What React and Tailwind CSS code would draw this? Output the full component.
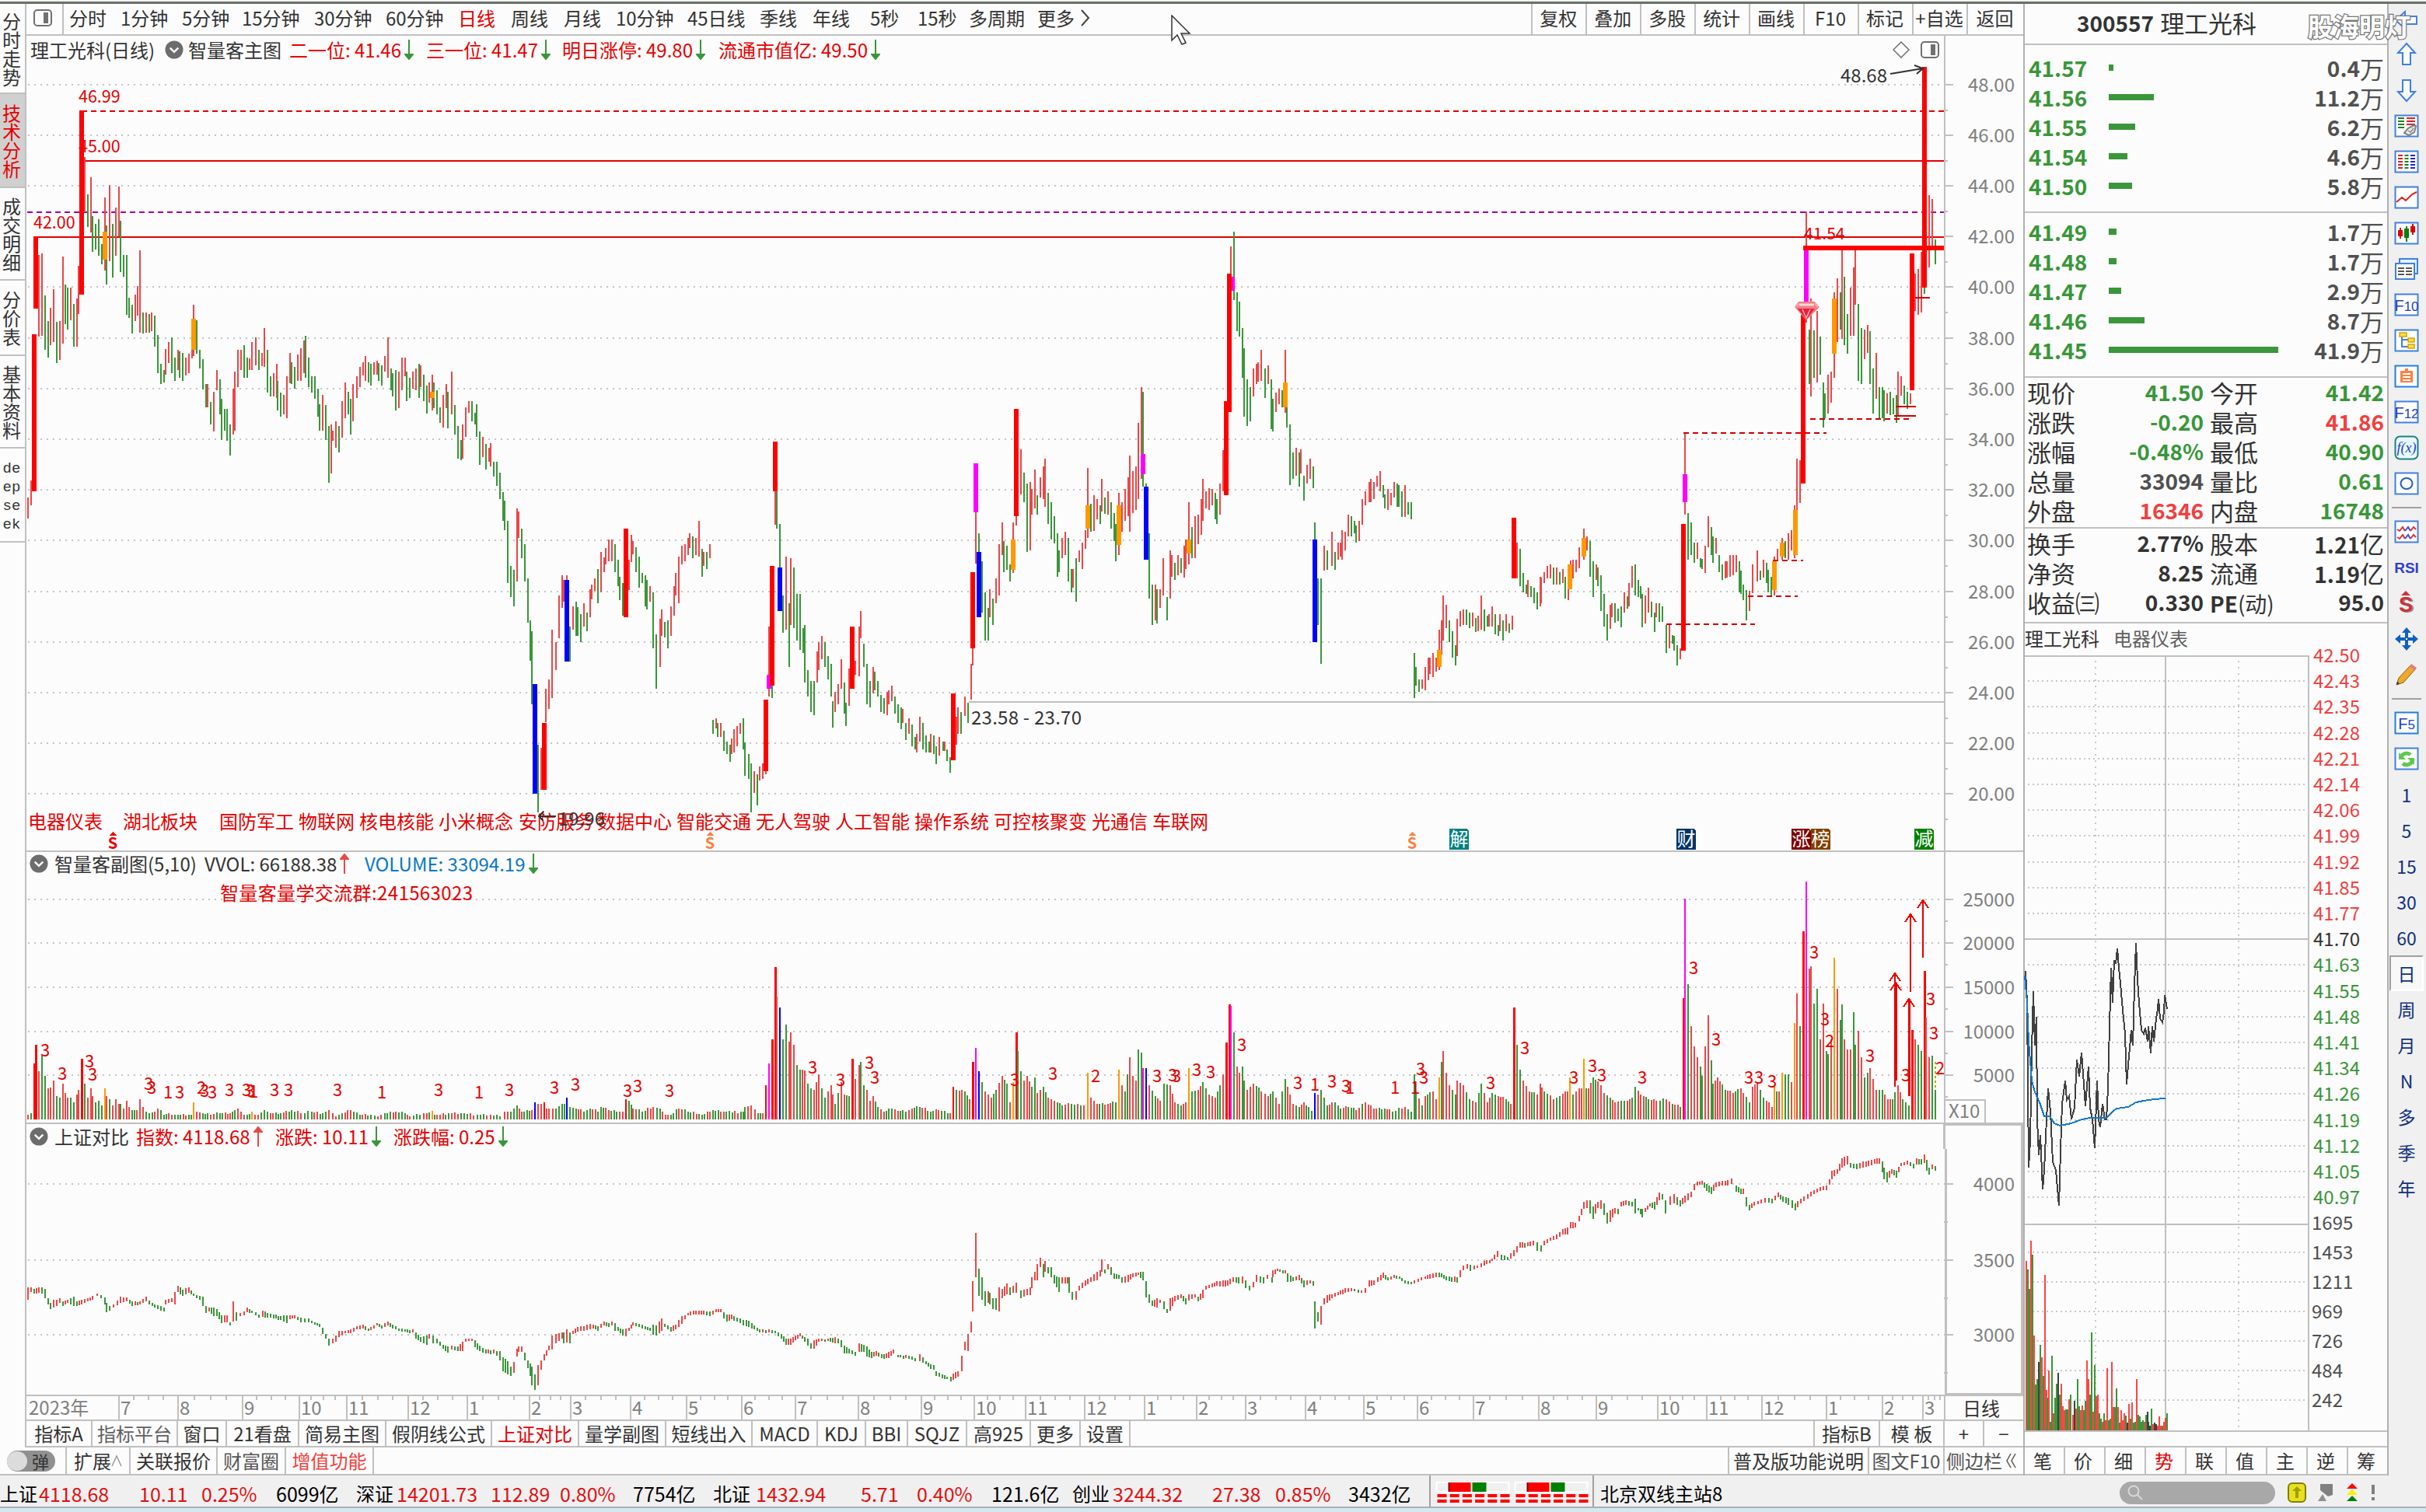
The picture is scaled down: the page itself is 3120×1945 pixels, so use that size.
import { Fragment } from 'react'

const RED = '#e60000'
const UP = '#e8484a'
const DOWN = '#3a963a'
const LINE = '#c0c0c0'

// Chart samples are stored on a finer grid than the page
const KX = 1.5077
const KY = 2.24
const KV = 2.6133
const px = (x) => Math.round(x / KX)
const py = (y) => Math.round(y / KY)

// x high low
const PRICE = `55 1433 1495,61 1384 1455,76 735 970,82 730 967,88 852 1007,94 925 1030,98 887 995,104 833 985,110 928 1047,116 925 1038,122 740 990,126 820 935,131 828 950,137 828 922,143 875 998,149 860 998,152 766 905,164 452 612,170 560 653,176 511 670,179 622 725,185 645 720,191 632 738,197 703 762,203 570 780,206 650 820,212 533 753,218 645 800,224 597 738,230 538 680,234 636 783,240 735 797,246 735 908,251 857 917,257 878 962,263 850 925,267 825 910,272 721 958,278 900 962,284 900 958,290 905 958,294 900 955,300 910 998,306 965 1075,312 1048 1107,318 1066 1102,321 1005 1080,327 985 1047,333 972 1075,339 1030 1098,345 1008 1066,348 1012 1089,354 1018 1098,360 1030 1083,366 1020 1075,372 985 1033,375 878 1025,381 923 1020,387 1008 1062,393 1035 1123,399 1107 1173,402 1107 1173,408 1157 1222,414 1129 1244,420 1066 1124,426 1093 1195,430 1150 1267,436 1178 1240,441 1178 1270,447 1222 1312,453 1120 1253,456 1071 1240,462 1008 1115,468 1008 1066,474 995 1089,480 1030 1089,484 1033 1066,489 985 1066,496 972 1052,502 1008 1066,508 1017 1055,512 945 1057,518 1008 1132,524 1084 1142,530 1075 1142,536 1048 1146,539 1098 1182,545 1132 1200,550 1137 1195,557 1084 1204,562 1017 1105,566 1044 1107,572 1057 1120,578 1021 1098,584 1004 1098,589 981 1075,592 968 1089,598 1030 1115,604 1084 1132,610 1084 1150,616 1120 1200,619 1164 1240,626 1137 1240,632 1168 1267,638 1227 1392,643 1222 1365,646 1240 1270,652 1213 1290,658 1227 1303,664 1155 1262,670 1102 1204,676 1129 1195,680 1150 1253,685 1107 1213,692 1084 1146,698 1057 1115,704 1044 1083,708 1026 1098,714 1044 1102,719 1048 1110,725 1044 1080,731 1039 1080,735 1045 1098,740 1052 1110,746 1026 1070,752 972 1089,758 1062 1125,761 1075 1142,768 1066 1182,773 1071 1177,779 1030 1124,785 1030 1084,789 1071 1155,795 1089 1146,801 1071 1120,806 1062 1124,813 1048 1146,815 1052 1115,821 1080 1155,827 1111 1191,833 1102 1160,839 1080 1182,842 1102 1177,848 1124 1195,854 1173 1218,860 1137 1231,866 1107 1177,869 1129 1235,876 1070 1195,882 1168 1253,888 1227 1321,894 1267 1326,897 1222 1321,903 1173 1258,909 1155 1190,915 1155 1213,921 1190 1222,924 1164 1258,930 1244 1339,936 1258 1316,942 1280 1352,948 1290 1330,951 1276 1343,957 1330 1374,963 1330 1401,969 1361 1437,975 1419 1500,978 1442 1528,984 1501 1680,990 1630 1720,996 1643 1747,1002 1465 1675,1005 1473 1550,1011 1523 1608,1017 1567 1675,1023 1667 1795,1029 1787 1903,1032 1819 2030,1044 2145 2340,1050 2155 2275,1059 1985 2080,1065 1957 2042,1071 1814 2012,1078 1850 1930,1084 1716 1840,1090 1657 1752,1093 1672 1733,1099 1658 1690,1105 1805 1907,1111 1747 1814,1117 1733 1832,1120 1750 1832,1126 1770 1850,1132 1738 1805,1138 1765 1818,1144 1697 1778,1147 1684 1728,1153 1667 1702,1159 1639 1738,1165 1590 1707,1171 1607 1648,1174 1580 1626,1180 1554 1617,1186 1554 1617,1192 1568 1648,1198 1612 1690,1201 1662 1729,1207 1680 1774,1219 1612 1700,1225 1541 1620,1228 1559 1597,1234 1576 1648,1240 1603 1693,1246 1652 1680,1252 1657 1747,1255 1670 1756,1261 1689 1733,1267 1706 1868,1273 1827 1984,1280 1783 1921,1283 1756 1832,1289 1792 1836,1295 1787 1868,1301 1747 1832,1307 1688 1774,1310 1652 1716,1316 1604 1738,1322 1572 1626,1328 1568 1617,1334 1550 1599,1337 1536 1580,1343 1546 1608,1349 1550 1599,1355 1500 1604,1361 1581 1662,1364 1590 1630,1370 1590 1640,1376 1568 1608,1383 2074 2114,1388 2070 2100,1391 2083 2124,1397 2083 2124,1403 2105 2164,1409 2137 2173,1415 2146 2195,1418 2128 2173,1424 2101 2168,1430 2092 2150,1436 2083 2114,1442 2070 2160,1445 2140 2236,1452 2173 2244,1457 2200 2340,1463 2222 2285,1469 2231 2320,1473 2208 2250,1479 2200 2244,1485 2200 2230,1491 1805 2007,1497 1940 2012,1503 1415 1513,1506 1415 1523,1512 1510 1640,1518 1716 1823,1524 1604 1814,1530 1738 1921,1533 1608 1801,1539 1635 1810,1545 1711 1845,1551 1711 1873,1557 1809 1882,1560 1800 1967,1566 1930 2007,1572 1962 2051,1578 1962 2060,1584 1877 1967,1587 1850 1930,1593 1832 1900,1599 1850 1922,1605 1890 1957,1611 1913 2007,1614 2020 2096,1620 1994 2051,1626 1971 2029,1632 1900 1985,1638 1967 2056,1641 2025 2092,1647 1926 2033,1659 1904 1944,1666 1805 1948,1669 1760 1840,1675 1855 1922,1681 1913 2029,1687 1962 2038,1693 1922 1998,1696 1935 1990,1702 1962 2007,1708 2003 2051,1714 2011 2056,1720 1994 2060,1723 1989 2029,1729 1976 2020,1735 2007 2056,1741 2029 2083,1747 2038 2101,1750 2043 2083,1756 2083 2132,1762 2070 2114,1768 2087 2150,1774 2123 2159,1777 2114 2168,1783 2065 2137,1789 2083 2159,1795 2118 2168,1801 2137 2168,1804 2115 2168,1810 2118 2173,1816 2150 2203,1822 2123 2177,1829 2137 2164,1832 2137 2164,1837 2159 2194,1843 2182 2226,1855 2065 2146,1858 2038 2114,1864 2051 2114,1871 2007 2064,1877 2025 2083,1883 1913 2016,1886 1868 1917,1892 1477 1625,1898 1536 1660,1904 1617 1765,1910 1707 1845,1916 1752 1845,1919 1698 1778,1925 1725 1801,1931 1667 1738,1937 1568 1716,1943 1505 1600,1946 1558 1648,1952 1572 1643,1958 1626 1675,1964 1505 1652,1970 1480 1514,1979 1295 1424,1985 1361 1446,1991 1393 1590,1997 1388 1586,2000 1410 1482,2006 1352 1464,2012 1428 1482,2018 1375 1433,2024 1344 1437,2027 1321 1460,2033 1420 1510,2039 1446 1555,2045 1487 1565,2051 1536 1662,2054 1585 1648,2060 1549 1608,2066 1532 1600,2072 1549 1675,2078 1639 1706,2081 1640 1693,2087 1608 1733,2093 1585 1620,2099 1563 1640,2105 1528 1582,2109 1348 1550,2115 1451 1532,2121 1428 1530,2127 1437 1496,2133 1455 1510,2136 1380 1473,2142 1433 1480,2148 1415 1482,2154 1446 1523,2160 1478 1558,2163 1510 1617,2169 1420 1600,2175 1446 1532,2181 1410 1500,2187 1375 1487,2190 1313 1532,2196 1357 1478,2202 1343 1469,2208 1218 1437,2214 1115 1380,2217 1129 1402,2223 1393 1410,2229 1536 1724,2235 1684 1801,2241 1684 1787,2244 1697 1796,2250 1698 1752,2256 1608 1715,2263 1720 1787,2269 1585 1725,2272 1600 1662,2278 1621 1670,2284 1599 1658,2290 1608 1652,2296 1572 1665,2299 1554 1640,2305 1446 1627,2311 1518 1608,2317 1487 1608,2323 1482 1568,2329 1437 1541,2332 1380 1500,2338 1415 1464,2344 1406 1469,2350 1410 1455,2356 1420 1496,2359 1437 1510,2365 1393 1482,2371 1298 1415,2386 711 800,2392 668 865,2398 842 954,2404 869 970,2410 945 1089,2413 1004 1200,2419 1093 1228,2425 1115 1213,2431 1062 1142,2437 1048 1107,2440 1044 1100,2446 1008 1098,2453 1062 1146,2459 1053 1106,2465 1093 1236,2468 1150 1244,2474 1132 1187,2480 1120 1164,2486 1124 1173,2492 1008 1190,2495 1150 1231,2501 1222 1397,2507 1303 1380,2513 1290 1370,2519 1303 1402,2522 1295 1365,2528 1370 1442,2534 1340 1393,2540 1321 1380,2546 1343 1406,2549 1505 1560,2555 1667 1801,2561 1667 1913,2567 1572 1644,2573 1586 1643,2582 1532 1630,2588 1590 1643,2594 1563 1613,2600 1563 1604,2603 1527 1613,2609 1532 1585,2615 1482 1545,2621 1487 1545,2627 1500 1536,2630 1514 1563,2636 1500 1558,2642 1437 1513,2648 1415 1455,2655 1388 1446,2658 1380 1446,2664 1388 1437,2670 1370 1402,2676 1357 1415,2682 1397 1433,2685 1424 1464,2691 1410 1469,2697 1420 1455,2703 1388 1433,2709 1393 1460,2712 1397 1460,2718 1415 1490,2724 1397 1490,2730 1446 1482,2736 1446 1496,2742 1882 2012,2745 1922 1976,2751 1958 1994,2757 1957 1985,2763 1922 1990,2769 1895 1960,2772 1895 1943,2778 1882 1952,2784 1895 1935,2790 1814 1930,2796 1787 1886,2799 1716 1845,2805 1743 1810,2811 1787 1850,2817 1818 1895,2823 1859 1917,2826 1783 1890,2832 1760 1805,2838 1756 1800,2844 1756 1801,2850 1765 1810,2856 1765 1805,2862 1781 1822,2866 1775 1818,2872 1716 1814,2878 1756 1818,2884 1774 1805,2887 1770 1805,2893 1747 1805,2899 1770 1828,2905 1800 1832,2908 1770 1820,2914 1787 1845,2920 1770 1818,2926 1796 1823,2932 1774 1814,2941 1563 1667,2947 1581 1689,2953 1652 1706,2959 1684 1711,2962 1670 1720,2968 1688 1720,2974 1693 1738,2980 1706 1756,2986 1662 1747,2989 1665 1738,2995 1648 1680,3001 1630 1667,3007 1626 1667,3013 1635 1684,3019 1635 1684,3025 1648 1685,3031 1640 1680,3035 1662 1725,3041 1626 1729,3046 1615 1680,3050 1612 1666,3056 1612 1648,3062 1577 1638,3071 1523 1613,3077 1546 1586,3083 1559 1661,3089 1617 1720,3095 1626 1670,3098 1635 1690,3104 1657 1760,3110 1711 1805,3116 1770 1845,3122 1743 1813,3125 1738 1778,3131 1738 1795,3137 1755 1790,3143 1747 1808,3149 1706 1765,3155 1719 1755,3158 1680 1747,3164 1630 1693,3170 1626 1715,3176 1670 1720,3182 1688 1725,3185 1711 1808,3191 1716 1796,3197 1693 1765,3203 1733 1778,3209 1765 1822,3212 1738 1778,3218 1738 1792,3224 1747 1792,3231 1801 1882,3237 1801 1868,3243 1830 1855,3246 1832 1876,3252 1859 1917,3258 1868 1900,3267 1247 1483,3273 1478 1612,3279 1505 1600,3285 1563 1622,3291 1563 1610,3297 1608 1635,3300 1610 1640,3306 1572 1652,3312 1487 1577,3318 1519 1600,3321 1545 1622,3327 1549 1595,3333 1599 1648,3339 1626 1670,3345 1617 1667,3348 1617 1665,3354 1600 1662,3360 1599 1657,3366 1599 1648,3372 1617 1706,3375 1644 1711,3381 1684 1729,3387 1700 1787,3393 1702 1760,3399 1627 1710,3408 1586 1675,3414 1644 1670,3420 1613 1665,3426 1621 1680,3429 1643 1706,3435 1662 1720,3441 1604 1716,3447 1581 1612,3456 1550 1612,3462 1558 1608,3468 1537 1612,3474 1528 1585,3480 1455 1608,3484 1321 1505,3490 1325 1450,3502 610 930,3508 950 1107,3511 860 1142,3517 953 1089,3523 895 1102,3529 970 1080,3535 1102 1231,3538 1133 1205,3544 1080 1191,3550 1070 1160,3556 842 1089,3562 802 985,3568 842 950,3571 720 976,3577 797 995,3583 905 1020,3589 829 967,3595 770 967,3598 720 878,3604 875 1098,3610 945 1107,3616 950 1035,3622 936 1017,3626 954 1107,3632 1062 1192,3638 1017 1150,3644 1115 1205,3650 1116 1205,3653 1124 1214,3659 1133 1191,3665 1129 1196,3671 1147 1195,3677 1138 1218,3680 1070 1196,3686 1084 1140,3692 1111 1165,3698 1129 1178,3704 1133 1165,3714 788 895,3719 775 908,3725 725 900,3731 820 847,3740 563 770,3746 573 714,3752 690 762`

// x top bottom colour, drawn wide
const MARKED = `67 963 1415 r,70 682 890 r,158 318 850 r,203 668 748 o,375 918 1007 o,839 1129 1146 o,1038 1971 2288 b,1056 2083 2276 r,1099 1671 1907 b,1213 1523 1778 r,1485 2016 2222 r,1491 1944 1985 m,1497 1631 1976 r,1503 1272 1415 r,1512 1636 1761 b,1653 1805 1984 r,1849 1998 2190 r,1886 1649 1868 r,1892 1335 1477 m,1898 1590 1778 b,1964 1554 1643 o,1970 1178 1487 r,2109 1456 1523 o,2169 1456 1571 o,2217 1308 1366 m,2223 1402 1612 b,2305 1554 1594 o,2377 1156 1428 r,2389 797 838 m,2383 788 1187 r,2492 1102 1173 o,2549 1555 1850 b,2790 1873 1922 o,2935 1492 1667 r,3044 1626 1698 o,3071 1550 1604 o,3264 1510 1876 r,3267 1366 1446 m,3441 1617 1700 o,3456 1563 1604 o,3481 1469 1600 o,3502 716 880 m,3496 908 1393 r,3556 860 1020 o,3708 730 1124 r,3731 193 829 r`

const INDEX = `55 813 855,61 813 828,67 818 834,76 813 832,82 813 834,88 818 850,94 850 870,98 865 886,104 855 880,110 855 875,116 850 865,122 860 876,131 855 865,143 845 876,149 860 875,158 855 870,170 850 860,180 842 855,188 834 842,196 840 850,203 848 870,206 865 896,212 875 892,220 870 880,234 845 865,246 848 860,257 860 875,272 860 870,284 845 860,290 858 870,300 870 880,312 876 892,318 880 895,321 855 870,333 850 862,339 828 870,345 808 828,354 820 842,366 813 830,375 834 842,387 842 855,393 845 875,399 875 900,405 880 895,414 880 910,420 886 910,430 906 932,441 906 930,447 930 942,453 860 928,458 896 925,466 900 910,474 895 908,480 880 896,489 890 900,502 905 915,509 890 912,518 900 915,530 903 916,545 910 922,557 906 932,562 906 920,572 908 916,584 915 930,598 918 930,610 930 938,619 935 945,626 948 970,632 970 985,638 985 1010,646 985 1000,652 975 995,658 960 980,670 958 968,680 955 968,692 943 955,704 938 952,714 950 960,725 940 952,731 933 938,740 940 952,752 928 940,761 938 950,773 950 960,785 955 963,800 955 965,806 964 985,815 980 995,827 975 1005,833 970 985,840 975 1000,848 985 1000,860 1005 1020,869 1012 1032,876 1010 1022,888 1012 1026,897 995 1026,903 985 995,915 985 992,921 990 1015,930 1010 1027,942 1022 1035,957 1022 1035,963 1027 1042,969 1028 1058,975 1048 1095,984 1060 1105,990 1080 1110,996 1064 1100,1002 1020 1045,1005 1012 1030,1011 1012 1030,1017 1032 1058,1023 1058 1085,1029 1068 1110,1032 1080 1142,1038 1105 1157,1044 1075 1142,1050 1058 1090,1056 1038 1058,1065 1010 1025,1071 976 1022,1078 970 1000,1090 965 985,1093 965 1000,1099 955 997,1105 965 1000,1111 960 970,1120 945 962,1132 943 958,1144 935 955,1150 938 950,1159 943 958,1171 928 940,1180 932 945,1186 928 940,1192 932 958,1198 945 958,1207 955 975,1213 952 978,1219 948 960,1228 930 940,1240 935 945,1252 943 955,1261 948 958,1267 938 972,1273 940 975,1283 917 958,1289 935 945,1301 945 962,1310 938 955,1316 922 945,1322 910 935,1328 908 920,1334 898 908,1345 892 905,1355 890 905,1364 890 905,1376 895 910,1388 887 897,1397 886 897,1403 897 916,1409 905 928,1418 905 920,1430 915 928,1442 922 940,1452 925 945,1463 940 955,1473 955 965,1491 955 965,1503 960 968,1515 970 985,1524 985 1005,1533 985 1005,1542 975 990,1551 968 978,1560 980 995,1566 985 1010,1572 1000 1018,1578 990 1020,1587 985 995,1605 985 992,1620 980 1000,1626 985 1000,1632 990 1015,1638 1010 1035,1647 1020 1035,1659 1030 1042,1666 1000 1030,1675 1005 1030,1681 1012 1045,1690 1030 1050,1699 1028 1042,1714 1038 1052,1723 1030 1050,1733 1022 1035,1741 1040 1048,1762 1042 1052,1775 1050 1062,1783 1038 1062,1795 1060 1072,1810 1075 1090,1816 1095 1110,1828 1105 1118,1837 1112 1122,1844 1112 1130,1849 1102 1125,1858 1095 1112,1865 1043 1095,1871 996 1025,1877 970 1027,1883 928 964,1886 792 895,1892 630 780,1898 750 842,1904 780 855,1910 825 876,1916 825 865,1919 830 870,1925 850 885,1931 850 888,1937 812 895,1943 818 850,1952 800 835,1958 812 840,1964 808 832,1971 797 830,1979 822 850,1991 818 838,1997 812 838,2000 778 815,2006 760 790,2012 735 790,2018 713 745,2024 735 778,2027 725 760,2033 745 765,2039 745 780,2045 770 800,2054 780 828,2060 780 800,2070 780 800,2073 780 832,2079 828 855,2087 825 855,2093 808 822,2105 788 808,2115 778 795,2127 760 790,2133 755 775,2136 718 760,2142 752 765,2148 735 752,2154 745 770,2160 765 785,2169 772 785,2175 780 797,2187 770 795,2196 765 780,2208 762 772,2217 760 790,2223 792 848,2229 835 865,2235 858 875,2244 850 880,2250 855 865,2257 860 885,2263 885 900,2269 850 890,2278 842 860,2290 835 850,2299 850 870,2305 835 858,2317 835 848,2323 845 860,2332 820 850,2338 808 820,2350 800 812,2359 792 808,2371 790 810,2380 790 808,2391 778 795,2402 780 800,2410 775 800,2415 790 815,2423 808 822,2431 795 812,2437 770 795,2450 780 800,2458 770 785,2466 780 797,2468 755 780,2477 750 758,2492 755 765,2497 765 795,2508 780 792,2519 772 788,2528 790 812,2540 788 800,2546 792 808,2549 860 952,2555 896 928,2561 875 938,2567 850 870,2573 840 865,2582 835 850,2594 828 840,2609 815 830,2620 815 825,2640 822 830,2648 815 830,2655 788 810,2664 790 805,2672 778 795,2682 762 782,2691 778 790,2703 772 782,2714 775 785,2724 788 800,2736 795 803,2750 785 795,2763 775 785,2772 768 785,2784 762 778,2796 765 778,2805 775 790,2826 778 797,2832 755 778,2838 740 755,2845 735 750,2851 738 758,2865 740 748,2878 725 740,2893 715 725,2904 690 712,2911 703 722,2924 710 722,2935 688 708,2947 662 680,2962 662 675,2973 655 672,2980 662 690,2988 672 692,2995 655 672,3007 645 655,3019 635 650,3030 618 635,3040 612 635,3045 592 615,3054 595 612,3062 572 590,3071 525 550,3077 520 545,3083 520 565,3089 540 582,3098 525 545,3104 520 550,3110 530 570,3117 562 598,3122 555 592,3131 545 565,3137 550 568,3143 525 540,3152 520 535,3164 525 540,3170 515 565,3176 545 555,3185 550 578,3191 545 560,3200 530 542,3209 525 552,3218 495 520,3224 500 518,3230 520 565,3238 508 535,3246 500 530,3258 520 540,3267 505 528,3279 490 510,3285 465 485,3291 458 470,3300 455 468,3309 465 488,3318 475 500,3327 460 475,3340 455 470,3350 452 470,3358 448 465,3366 470 490,3375 480 500,3381 480 500,3387 510 540,3393 535 555,3402 525 538,3415 518 530,3423 512 528,3436 515 530,3448 495 510,3457 508 525,3468 512 535,3481 530 555,3492 515 530,3505 500 515,3517 485 500,3529 475 488,3541 470 485,3547 450 468,3552 420 450,3562 415 430,3571 380 410,3583 370 400,3589 395 410,3600 398 415,3613 390 410,3623 388 405,3635 382 398,3644 378 398,3650 390 425,3653 410 450,3659 425 460,3668 415 430,3677 420 445,3686 395 405,3698 388 400,3710 398 412,3716 380 400,3725 382 400,3732 365 395,3736 385 420,3740 410 435,3746 400 415,3752 405 420`

// x height [colour]
const VOLUME = `55 15,61 20,67 188 r,70 250 r,76 162,82 215,88 146,94 105,98 108,104 130,110 78,116 73,122 120,126 90,131 73,137 73,143 57,149 83,152 99,158 204 r,164 120,170 73,176 104,179 78,185 57,191 62,197 47,203 104 o,206 78,212 68,218 47,224 68,230 52,234 52,240 36,246 62,251 42,257 31,266 31,272 68,278 41,284 26,290 21,300 26,306 36,312 31,318 15,327 21,333 15,345 15,366 15,375 57 o,381 26,393 21,408 15,426 21,447 20,456 31,462 36,474 15,489 26 o,500 15,512 31,524 20,545 20,566 31,584 20,604 26,626 20,638 31,652 10,664 20,680 31,698 15,719 15,733 10,746 20,768 26,785 20,795 10,821 20,839 30 o,848 15,870 20,900 20,925 15,951 15,970 10,978 26,990 26,1002 47,1011 26,1032 31,1038 57 b,1044 52,1056 57 r,1065 36,1078 36,1090 52,1099 73 b,1105 42,1117 36,1132 26,1144 36,1160 26,1165 42,1180 31,1201 26,1213 68 r,1219 62,1228 36,1246 26,1267 42,1280 36,1290 15,1301 15,1316 36,1334 26,1361 15,1382 31,1403 26,1442 26,1445 42,1457 47,1470 20,1479 20,1485 115 r,1491 188 m,1497 268 r,1503 512 r,1506 413,1512 376 b,1518 270,1524 318,1530 262,1533 292,1539 250,1545 183,1551 167,1560 165,1566 120,1572 104,1578 99,1587 151,1593 104,1600 73,1611 115,1620 52,1632 125,1638 84,1647 78,1653 204 r,1659 136,1666 183,1669 193,1675 115,1681 99,1687 62,1693 78,1702 42,1714 26,1729 36,1741 30,1756 26,1768 36,1783 42,1804 26,1820 31,1843 20,1849 110 r,1855 99,1871 94,1880 68,1886 193 r,1892 240 m,1898 162 b,1904 125,1910 94,1922 73,1931 99,1943 146,1952 120,1958 57,1964 125 o,1970 292 r,1973 230,1979 162,1985 130,1991 146,2000 110,2006 141,2012 89,2024 110,2033 73,2045 62,2060 47,2078 52,2102 47,2109 157 o,2115 73,2127 52,2148 52,2163 57,2169 167 o,2175 115,2181 94,2190 209,2196 146,2202 130,2208 235,2214 224,2217 172 m,2223 172 b,2229 115,2241 78,2250 62,2257 120,2269 115,2278 57,2290 47,2299 57,2305 172 o,2311 94,2323 99,2332 125,2344 83,2356 73,2365 115,2371 151,2377 260 r,2383 387 r,2387 382 m,2392 293,2398 177,2404 157,2410 177,2413 130,2419 99,2431 120,2446 94,2459 78,2468 94,2480 52,2492 136,2501 83,2507 52,2519 42,2528 57,2543 30,2549 89 b,2555 83,2561 99,2567 73,2573 47,2588 57,2600 36,2615 42,2630 31,2648 57,2664 36,2685 36,2700 26,2724 42,2736 26,2742 151,2745 94,2757 47,2763 78,2778 94,2784 68,2790 141 o,2796 193,2799 230,2805 157,2811 115,2823 83,2826 130,2838 115,2850 68,2862 57,2872 120,2884 57,2893 89,2905 78,2920 68,2930 52,2935 376 r,2941 250,2947 167,2953 130,2965 94,2980 83,2986 120,2995 94,3013 68,3025 78,3035 94,3044 141 o,3050 83,3062 104,3071 204 o,3080 104,3089 141,3104 115,3110 89,3122 73,3131 57,3143 62,3155 62,3164 73,3170 109,3182 83,3197 67,3212 62,3231 67,3243 52,3258 42,3264 408 r,3267 742 m,3273 454,3279 314,3285 245,3291 209,3297 177,3300 146,3306 245,3312 350,3318 198,3321 120,3330 141,3345 99,3360 89,3375 104,3393 57,3399 109,3408 125,3420 73,3436 42,3441 109 o,3450 94,3456 157 o,3468 151,3474 125,3480 324 o,3484 423,3490 314,3496 632 r,3502 800 m,3508 507,3511 516,3517 390,3523 440,3529 270,3535 390,3541 230,3544 219,3550 270,3556 543 o,3562 440,3568 335,3571 387,3577 270,3583 235,3589 235,3595 361,3598 250,3604 298,3610 209,3616 141,3626 172,3638 99,3650 99,3660 68,3670 68,3680 115,3690 68,3702 47,3708 300 r,3714 270,3719 250,3725 230,3731 500 r,3734 343,3740 209,3746 214,3752 99`

const INTRADAY_VOLUME = `791 570 u,794 540 d,797 475 d,800 638 u,803 590 d,806 318 u,809 153 d,812 172 d,815 230 k,818 288 d,821 245 u,824 182 d,827 523 u,830 135 u,833 110 d,836 200 u,839 30 d,842 250 d,845 57 u,848 110 d,851 157 d,854 193 k,857 120 d,860 157 u,863 80 u,866 67 u,869 70 d,872 70 d,875 105 u,878 120 d,882 52 u,885 100 k,888 73 u,891 172 d,894 80 d,897 67 u,900 83 u,903 67 d,906 99 d,909 235 u,912 172 u,915 120 d,918 330 d,921 62 u,924 220 d,927 115 u,930 120 u,933 57 d,936 40 d,939 30 u,942 57 d,945 35 u,948 209 u,951 35 d,954 40 d,957 230 u,960 78 u,963 78 d,966 140 d,969 78 u,972 26 d,975 67 u,978 35 u,981 57 u,984 50 d,987 26 k,990 89 u,993 40 d,996 94 u,999 26 d,1002 30 d,1005 172 u,1008 52 d,1011 47 d,1014 30 d,1017 35 d,1020 30 u,1023 52 d,1026 62 k,1029 30 k,1032 15 k,1035 73 d,1038 20 u,1041 25 k,1044 20 k,1047 15 u,1050 47 u,1053 15 u,1056 15 d,1059 30 u,1062 42 u,1065 57 d`

const INTRADAY = `791 1249,794 1290,797 1502,801 1468,804 1350,806 1275,809 1345,812 1308,814 1440,817 1486,820 1460,824 1530,828 1505,832 1440,836 1400,840 1430,844 1495,850 1505,855 1540,857 1551,860 1480,862 1420,869 1390,872 1415,876 1410,881 1440,886 1425,891 1363,895 1385,900 1354,904 1395,908 1423,914 1372,917 1425,921 1440,925 1477,930 1390,934 1440,937 1450,941 1420,945 1440,949 1440,952 1400,955 1320,957 1245,960 1290,963 1235,966 1240,969 1220,972 1245,976 1265,980 1300,984 1330,988 1395,991 1370,996 1325,1000 1345,1003 1270,1005 1213,1009 1260,1012 1290,1016 1325,1020 1330,1024 1322,1028 1340,1030 1320,1034 1355,1038 1320,1041 1340,1045 1310,1048 1298,1050 1285,1053 1310,1057 1315,1060 1302,1062 1280,1066 1298`
const AVERAGE = `790 1255,794 1290,797 1340,804 1390,810 1405,818 1418,828 1436,838 1436,848 1445,858 1448,880 1445,900 1440,916 1438,948 1438,960 1430,968 1426,990 1424,1005 1418,1020 1416,1040 1414,1063 1413`

const COLORS = { r: '#ff0000', o: '#ff9900', b: '#0000ff', m: '#ff00ff', u: '#ff4444', d: DOWN, k: '#404040' }

const parse = (s) => s.split(',').map((row) => row.split(' ').map((v) => (isNaN(v) ? v : Number(v))))

// fill the days between two stored samples
function densify(rows) {
  const out = []
  rows.forEach((row, i) => {
    out.push(row)
    const next = rows[i + 1]
    if (!next || next[0] - row[0] < 9) return
    const n = Math.round((next[0] - row[0]) / 6)
    for (let k = 1; k < n; k++) {
      const t = k / n
      const j = ((k * 7 + i * 5) % 5) - 2
      const a = typeof row[2] === 'number'
      if (a) {
        out.push([row[0] + (next[0] - row[0]) * t, row[1] + (next[1] - row[1]) * t + j, row[2] + (next[2] - row[2]) * t + j])
      } else {
        const lo = row[2] ? next[1] : row[1]
        const hi = next[2] ? lo : next[1]
        out.push([row[0] + (next[0] - row[0]) * t, Math.max(10, lo + (hi - lo) * t + j * 2)])
      }
    }
  })
  return out
}

const PRICE_BARS = parse(PRICE)
const INDEX_BARS = densify(parse(INDEX))
const VOLUME_BARS = densify(parse(VOLUME))

function Bars({ rows, toY }) {
  return rows.map(([x, hi, lo], i) => {
    const prev = rows[i - 1] || rows[i]
    const up = hi + lo <= prev[1] + prev[2]
    return <rect key={i} x={px(x) - 1} y={toY(hi)} width="2" height={Math.max(3, toY(lo) - toY(hi))} fill={up ? UP : DOWN} />
  })
}

function T({ x, cy, size = 24, fill = '#333', end, mid, bold, length, children }) {
  return (
    <text x={x} y={cy + size * 0.365} fontSize={size} fill={fill} fontWeight={bold ? 700 : 400} textLength={length} textAnchor={end ? 'end' : mid ? 'middle' : 'start'}>
      {children}
    </text>
  )
}

const Dots = ({ y, x1 = 36, x2 = 2498 }) => <path d={`M${x1} ${y}H${x2}`} stroke="#c4c4c4" strokeWidth="2" strokeDasharray="2 6" />

/* ---------- main chart ---------- */

const CONCEPTS = [
  [37, '电器仪表'], [159, '湖北板块'], [283, '国防军工'], [385, '物联网'], [463, '核电核能'], [565, '小米概念'], [668, '安防服务'], [769, '数据中心'],
  [871, '智能交通'], [973, '无人驾驶'], [1075, '人工智能'], [1177, '操作系统'], [1279, '可控核聚变'], [1405, '光通信'], [1483, '车联网'],
]

const BADGES = [[1864, '解', '#008080'], [2156, '财', '#003366'], [2304, '涨', '#800000'], [2329, '榜', '#804000'], [2462, '减', '#008000']]

const DASHED = [[2165, 2349, 557], [2328, 2455, 539], [2280, 2319, 721], [2248, 2312, 767], [2143, 2257, 803]]
const SHORT = [[2438, 2464, 523], [2436, 2464, 535], [2463, 2482, 383]]

function PriceChart() {
  return (
    <svg className="block" width="2568" height="1012" viewBox="34 82 2568 1012" shapeRendering="crispEdges">
      {Array.from({ length: 15 }, (_, i) => {
        const y = Math.round(108.5 + 65.2 * i)
        return (
          <Fragment key={i}>
            {i !== 3 && <Dots y={y} />}
            <path d={`M2500 ${y}h12M2500 ${y + 33}h5`} stroke={LINE} strokeWidth="2" />
            <T x={2591} cy={y} fill="#808080" end>{`${48 - i * 2}.00`}</T>
          </Fragment>
        )
      })}
      <path d="M2501 82V1094" stroke={LINE} strokeWidth="2" />
      <path d="M105 143H2500" stroke={RED} strokeWidth="2" strokeDasharray="7 5" />
      <path d="M35 273H2500" stroke="#a000a0" strokeWidth="2" strokeDasharray="7 5" />
      <path d="M105 207H2500M46 305H2500" stroke={RED} strokeWidth="2" />
      <path d="M1246 903H2500" stroke={LINE} strokeWidth="2" />
      <T x={101} cy={124} size={21.5} fill={RED}>46.99</T>
      <T x={101} cy={188} size={21.5} fill={RED}>45.00</T>
      <T x={43} cy={286} size={21.5} fill={RED}>42.00</T>
      {CONCEPTS.map(([x, name]) => <T key={name} x={x - 1} cy={1057} fill={RED}>{name}</T>)}
      <Bars rows={PRICE_BARS} toY={py} />
      {parse(MARKED).map(([x, a, b, c]) => (
        <rect key={x} x={px(x) - 3} y={py(a)} width="6" height={py(b) - py(a)} fill={COLORS[c]} />
      ))}
      {DASHED.map(([a, b, y]) => <path key={y} d={`M${a} ${y}H${b}`} stroke="#d00000" strokeWidth="2" strokeDasharray="7 5" />)}
      {SHORT.map(([a, b, y]) => <path key={y} d={`M${a} ${y}H${b}`} stroke="#d00000" strokeWidth="2" />)}
      <path d="M2319 319H2500" stroke="#ff0000" strokeWidth="6" />
      <T x={2320} cy={300} size={21} fill={RED}>41.54</T>
      <T x={1249} cy={923} length={142}>23.58 - 23.70</T>
      <T x={2367} cy={97}>48.68</T>
      <path d="M2431 95L2473 88M2462 84l11 4l-8 7" fill="none" stroke="#333" strokeWidth="2" shapeRendering="auto" />
      <path d="M693 1050h22M699 1044l-6 6l6 6" fill="none" stroke="#333" strokeWidth="2" />
      <T x={718} cy={1053}>19.96</T>
      <g shapeRendering="auto">
        <path d="M2313 388h21l6 7l-17 17l-15-17z" fill="#f08088" />
        <path d="M2312 397h22l-11 14z" fill="#e8203c" />
        <path d="M2314 392h19" stroke="#ffd8d8" strokeWidth="3" />
        <path d="M2310 395l4-5M2338 395l-4-5M2318 398l5 11l5-11" stroke="#ffb0b0" fill="none" strokeWidth="1.500" />
      </g>
      {[[145, RED], [913, '#ff8040'], [1816, '#ff8040']].map(([x, c]) => (
        <g key={x}>
          <path d={`M${x - 5} 1075L${x} 1070L${x + 5} 1075z`} fill={c} />
          <T x={x} cy={1085} size={20} fill={c} mid bold>S</T>
        </g>
      ))}
      {BADGES.map(([x, t, c]) => (
        <g key={x}>
          <path d={`M${x} 1066h22l3 3v24h-25z`} fill={c} />
          <T x={x + 12.5} cy={1079} size={24} fill="#fff" mid>{t}</T>
        </g>
      ))}
    </svg>
  )
}

/* ---------- volume ---------- */

// page x, page y, digit
const COUNTS = [
  [58, 1351, 3], [80, 1381, 3], [115, 1365, 3], [119, 1382, 3], [191, 1394, 3], [195, 1399, 3], [216, 1405, 1], [231, 1405, 3], [259, 1399, 2], [263, 1403, 3],
  [273, 1405, 3], [295, 1402, 3], [317, 1402, 3], [322, 1403, 3], [326, 1404, 1], [353, 1402, 3], [371, 1402, 3], [434, 1402, 3], [491, 1405, 1], [564, 1402, 3],
  [616, 1405, 1], [655, 1402, 3], [713, 1399, 3], [740, 1395, 3], [807, 1403, 3], [820, 1397, 3], [861, 1403, 3], [1045, 1373, 3], [1081, 1389, 3], [1118, 1367, 3],
  [1125, 1386, 3], [1305, 1389, 3], [1354, 1381, 3], [1409, 1384, 2], [1488, 1384, 3], [1508, 1383, 3], [1513, 1384, 3], [1539, 1376, 3], [1557, 1379, 3], [1597, 1344, 3],
  [1669, 1393, 3], [1691, 1395, 1], [1713, 1391, 3], [1731, 1397, 3], [1736, 1399, 1], [1794, 1399, 1], [1820, 1399, 1], [1827, 1375, 3], [1831, 1386, 3], [1917, 1393, 3],
  [1961, 1348, 3], [2024, 1386, 3], [2048, 1371, 3], [2060, 1383, 3], [2112, 1386, 3], [2178, 1245, 3], [2207, 1337, 3], [2249, 1386, 3], [2262, 1386, 3], [2279, 1391, 3],
  [2333, 1225, 3], [2347, 1311, 3], [2353, 1339, 2], [2405, 1358, 3], [2451, 1383, 3], [2483, 1285, 3], [2487, 1329, 3], [2495, 1374, 2],
]

const ARROWS = [[2437, 1252, 1398, 2], [2438, 1264, 1390, 4], [2457, 1176, 1276, 2], [2455, 1285, 1410, 3], [2473, 1158, 1232, 2]]

function VolumeChart() {
  return (
    <svg className="block" width="2568" height="318" viewBox="34 1126 2568 318" shapeRendering="crispEdges">
      {[1157, 1213, 1270, 1327, 1383].map((y, i) => (
        <Fragment key={y}>
          <Dots y={y} />
          <path d={`M2500 ${y}h12M2500 ${y + 28}h5`} stroke={LINE} strokeWidth="2" />
          <T x={2591} cy={y} fill="#808080" end>{25000 - i * 5000}</T>
        </Fragment>
      ))}
      <T x={283} cy={1149} fill={RED} length={325}>智量客量学交流群:241563023</T>
      <path d="M2501 1126V1444M2502 1415H2553V1444" fill="none" stroke={LINE} strokeWidth="2" />
      <T x={2506} cy={1429} fill="#808080">X10</T>
      {VOLUME_BARS.map(([x, v, c], i) => {
        const h = Math.round(v / KV)
        const up = v < 50 ? (i * 7 + (i >> 2)) % 9 < 4 : (i * 5 + (i >> 1)) % 7 < 4
        return <rect key={i} x={px(x) - 1} y={1440 - h} width={c === 'r' && v > 180 ? 3 : 2} height={h} fill={c ? COLORS[c] : up ? UP : DOWN} />
      })}
      <path d="M2489 1366V1400" stroke="#b0b000" strokeWidth="2" strokeDasharray="3 3" />
      {ARROWS.map(([x, a, b, w]) => (
        <g key={x + a} fill="none" stroke={RED}>
          <path d={`M${x} ${a}V${b}`} strokeWidth={w} />
          <path d={`M${x - 7} ${a + 10}L${x} ${a}L${x + 7} ${a + 10}`} strokeWidth="2" />
        </g>
      ))}
      {COUNTS.map(([x, y, n], i) => <T key={i} x={x} cy={y} size={22} fill={RED} mid>{n}</T>)}
    </svg>
  )
}

/* ---------- index comparison ---------- */

const toIndexY = (y) => Math.round(1345 + y / KV)

function IndexChart() {
  return (
    <svg className="block" width="2568" height="316" viewBox="34 1478 2568 316" shapeRendering="crispEdges">
      {[[1523, 4000], [1621, 3500], [1717, 3000]].map(([y, n]) => (
        <Fragment key={y}>
          <Dots y={y} />
          <path d={`M2500 ${y}h12M2500 ${y + 49}h5`} stroke={LINE} strokeWidth="2" />
          <T x={2591} cy={y} fill="#808080" end>{n}</T>
        </Fragment>
      ))}
      <path d="M2502 1478V1793H2600V1478" fill="none" stroke={LINE} strokeWidth="3" />
      <Bars rows={INDEX_BARS} toY={toIndexY} />
    </svg>
  )
}

const MONTHS = [230, 345, 471, 580, 673, 791, 906, 1026, 1107, 1222, 1331, 1439, 1542, 1665, 1786, 1889, 1988, 2103, 2220, 2320, 2416, 2531, 2645, 2748, 2857, 2983, 3095, 3215, 3309, 3417, 3541, 3650, 3728, 3772]

function TimeAxis() {
  return (
    <svg className="block" width="2466" height="30" viewBox="34 1796 2466 30" shapeRendering="crispEdges">
      <T x={37} cy={1811} fill="#808080">2023年</T>
      {MONTHS.slice(0, -1).map((m, i) => {
        const x = px(m)
        const step = (px(MONTHS[i + 1]) - x) / 4
        return (
          <g key={m}>
            <path d={`M${x} 1796V1826`} stroke={LINE} strokeWidth="2" />
            {[1, 2, 3].map((k) => <path key={k} d={`M${Math.round(x + step * k)} 1796v5`} stroke={LINE} strokeWidth="2" />)}
            <T x={x + 2} cy={1811} fill="#808080">{((i + 6) % 12) + 1}</T>
          </g>
        )
      })}
    </svg>
  )
}

/* ---------- bars around the charts ---------- */

const PERIODS = [
  ['分时', 'w-[66px]'], ['1分钟', 'w-[79px]'], ['5分钟', 'w-[77px]'], ['15分钟', 'w-[93px]'], ['30分钟', 'w-[92px]'], ['60分钟', 'w-[93px]'],
  ['日线', 'w-[68px] text-[#e60000]'], ['周线', 'w-[68px]'], ['月线', 'w-[67px]'], ['10分钟', 'w-[92px]'], ['45日线', 'w-[93px]'], ['季线', 'w-[68px]'],
  ['年线', 'w-[74px]'], ['5秒', 'w-[61px]'], ['15秒', 'w-[66px]'], ['多周期', 'w-[88px]'], ['更多', 'w-[56px]'],
]

const ACTIONS = ['复权', '叠加', '多股', '统计', '画线', 'F10', '标记', '+自选', '返回']

function PanelIcon() {
  return (
    <svg width="24" height="22" viewBox="0 0 24 22">
      <rect x="1" y="1" width="22" height="20" rx="4" fill="none" stroke="#707070" strokeWidth="2" />
      <rect x="13" y="4" width="6" height="14" fill="#707070" />
    </svg>
  )
}

function Toolbar() {
  return (
    <div className="flex h-[41px] border-b-2 border-[#c0c0c0]">
      <div className="flex w-[48px] items-center justify-center border-r-2 border-[#c0c0c0] pr-3 pb-1">
        <div className="ml-2"><PanelIcon /></div>
      </div>
      <div className="flex w-[1888px] items-center pb-1 pl-[7px]">
        {PERIODS.map(([name, cls]) => <span key={name} className={`shrink-0 ${cls}`}>{name}</span>)}
        <svg width="12" height="24" viewBox="0 0 12 24"><path d="M1 2l9 10l-9 10" fill="none" stroke="#444" strokeWidth="2" /></svg>
      </div>
      {ACTIONS.map((name) => (
        <div key={name} className="flex w-[70px] items-center justify-center border-l-2 border-[#c0c0c0] pr-0.5 pb-1 whitespace-nowrap last:w-[73px]">{name}</div>
      ))}
    </div>
  )
}

function Down() {
  return <svg className="ml-1 shrink-0" width="12" height="26" viewBox="0 0 12 26"><path d="M6 0V20M1 19h10l-5 6z" stroke={DOWN} strokeWidth="2" fill={DOWN} /></svg>
}

function Up() {
  return <svg className="ml-1 shrink-0" width="12" height="26" viewBox="0 0 12 26"><path d="M6 26V6M1 7h10l-5-6z" stroke={UP} strokeWidth="2" fill={UP} /></svg>
}

function Fold() {
  return (
    <svg className="shrink-0" width="24" height="26" viewBox="0 0 25 25">
      <circle cx="12.5" cy="12.5" r="12" fill="#6c6c6c" />
      <path d="M7 10l5.500 5.500l5.500-5.500" fill="none" stroke="#fff" strokeWidth="2.500" />
    </svg>
  )
}

const SIDE_TABS = [
  ['分时走势', 'h-[116px] pt-[2px]'],
  ['技术分析', 'h-[121px] bg-[#d0d0d0] text-[#e60000]'],
  ['成交明细', 'h-[119px]'],
  ['分价表', 'h-[97px]'],
  ['基本资料', 'h-[119px]'],
]

function SideTabs() {
  return (
    <div className="flex w-[34px] shrink-0 flex-col border-r-2 border-[#c0c0c0]">
      {SIDE_TABS.map(([name, cls]) => (
        <div key={name} className={`flex w-full shrink-0 flex-col items-center justify-center border-b-2 border-[#c0c0c0] pr-0.5 leading-6 ${cls}`}>
          {[...name].map((c) => <span key={c}>{c}</span>)}
        </div>
      ))}
      <div className="flex h-[121px] flex-col items-center justify-center border-b-2 border-[#c0c0c0] pt-1 pr-0.5 font-['Liberation_Mono','DejaVu_Sans_Mono',monospace] text-[19px] leading-6">
        {['de', 'ep', 'se', 'ek'].map((s) => <span key={s}>{s}</span>)}
      </div>
    </div>
  )
}

const INDICATORS = [
  ['指标A', 'w-[85px]'], ['指标平台', 'w-[110px] text-[#606060]'], ['窗口', 'w-[63px]'], ['21看盘', 'w-[93px]'], ['简易主图', 'w-[112px]'], ['假阴线公式', 'w-[136px]'],
  ['上证对比', 'w-[112px] text-[#e60000]'], ['量学副图', 'w-[112px]'], ['短线出入', 'w-[111px]'], ['MACD', 'w-[84px]'], ['KDJ', 'w-[62px]'], ['BBI', 'w-[54px]'],
  ['SQJZ', 'w-[76px]'], ['高925', 'w-[82px]'], ['更多', 'w-[64px]'], ['设置', 'w-[64px]'],
]

function Cell({ className, children }) {
  return <div className={`flex shrink-0 items-center justify-center border-r-2 border-[#c0c0c0] whitespace-nowrap ${className}`}>{children}</div>
}

function Charts() {
  return (
    <div className="flex w-[2568px] flex-col">
      <Toolbar />
      <div className="flex h-[36px] text-[#e60000]">
        <div className="flex w-[2468px] items-center border-r-2 border-[#c0c0c0] pl-[5px]">
          <span className="w-[173px] text-[#333]">理工光科(日线)</span>
          <Fold />
          <span className="ml-1.5 w-[130px] text-[#333]">智量客主图</span>
          <div className="flex w-[176px] items-center">二一位: 41.46<Down /></div>
          <div className="flex w-[175px] items-center">三一位: 41.47<Down /></div>
          <div className="flex w-[201px] items-center">明日涨停: 49.80<Down /></div>
          <div className="flex items-center">流通市值亿: 49.50<Down /></div>
          <div className="mr-[6px] ml-auto flex items-center gap-3.5">
            <svg width="22" height="22" viewBox="0 0 22 22"><path d="M11 1l10 10l-10 10l-10-10z" fill="none" stroke="#707070" strokeWidth="1.500" /></svg>
            <PanelIcon />
          </div>
        </div>
      </div>
      <PriceChart />
      <div className="flex h-[32px] border-t-2 border-[#c0c0c0]">
        <div className="flex w-[2468px] items-center border-r-2 border-[#c0c0c0] pl-1">
          <Fold />
          <span className="ml-2 w-[193px]">智量客副图(5,10)</span>
          <div className="flex w-[206px] items-center">VVOL: 66188.38<Up /></div>
          <div className="flex items-center text-[#0878c8]">VOLUME: 33094.19<Down /></div>
        </div>
      </div>
      <VolumeChart />
      <div className="flex h-[34px] border-t-2 border-[#c0c0c0] text-[#e60000]">
        <div className="flex w-[2468px] items-center border-r-[3px] border-[#c0c0c0] pl-1">
          <Fold />
          <span className="ml-2 w-[105px] text-[#333]">上证对比</span>
          <div className="flex w-[179px] items-center">指数: 4118.68<Up /></div>
          <div className="flex w-[152px] items-center">涨跌: 10.11<Down /></div>
          <div className="flex items-center">涨跌幅: 0.25<Down /></div>
        </div>
        <div className="w-[100px] border-t-2 border-r-[3px] border-[#c0c0c0]" />
      </div>
      <IndexChart />
      <div className="flex h-[34px] border-y-2 border-[#c0c0c0]">
        <TimeAxis />
        <div className="flex flex-1 items-center border-l-2 border-[#c0c0c0] pl-[22px]">日线</div>
      </div>
      <div className="flex h-[34px] border-b-2 border-[#c0c0c0]">
        {INDICATORS.map(([name, cls]) => <Cell key={name} className={cls}>{name}</Cell>)}
        <Cell className="flex-1" />
        <Cell className="w-[84px]">指标B</Cell>
        <Cell className="w-[83px]">模 板</Cell>
        <Cell className="w-[51px]">+</Cell>
        <div className="flex w-[50px] items-center justify-center">−</div>
      </div>
    </div>
  )
}

function ExtraBar() {
  return (
    <div className="flex h-[36px] border-b-2 border-[#c0c0c0]">
      <Cell className="w-[86px]">
        <div className="mr-1 flex h-[27px] w-[62px] items-center justify-between rounded-full bg-[#909090] pr-2 text-[22px]">
          <span className="h-[25px] w-[26px] rounded-full bg-[#dcdcdc]" />弹
        </div>
      </Cell>
      <Cell className="w-[82px]">扩展<svg width="14" height="20" viewBox="0 0 14 20"><path d="M1 17l6-13l6 13" fill="none" stroke="#999" strokeWidth="1.500" /></svg></Cell>
      <Cell className="w-[112px]">关联报价</Cell>
      <Cell className="w-[88px] text-[#555]">财富圈</Cell>
      <Cell className="w-[113px] text-[#f04040]">增值功能</Cell>
      <Cell className="flex-1" />
      <Cell className="w-[180px]">普及版功能说明</Cell>
      <Cell className="w-[97px] text-[#555]">图文F10</Cell>
      <div className="flex w-[101px] items-center gap-1 pl-0.5 whitespace-nowrap text-[#555]">侧边栏
        <svg width="14" height="22" viewBox="0 0 14 22"><path d="M7 2l-5 9l5 9M13 2l-5 9l5 9" fill="none" stroke="#555" strokeWidth="1.500" /></svg>
      </div>
    </div>
  )
}

/* ---------- quote panel ---------- */

const SELL = [['41.57', 6, '0.4'], ['41.56', 58, '11.2'], ['41.55', 34, '6.2'], ['41.54', 24, '4.6'], ['41.50', 30, '5.8']]
const BUY = [['41.49', 10, '1.7'], ['41.48', 10, '1.7'], ['41.47', 16, '2.9'], ['41.46', 46, '8.7'], ['41.45', 218, '41.9']]

function Book({ rows }) {
  return rows.map(([price, w, vol]) => (
    <div key={price} className="flex h-[38px] items-center pr-1 pl-[5px]">
      <span className="w-[103px] text-[28px] font-bold text-[#3a963a]">{price}</span>
      <span className="h-2 bg-[#3a963a]" style={{ width: w }} />
      <span className="ml-auto text-[28px] font-bold text-[#505050]">{vol}</span>
      <span className="text-[31px] text-[#505050]">万</span>
    </div>
  ))
}

const G = 'text-[#3a963a]'
const R = 'text-[#f04040]'
const QUOTES = [
  ['现价', '41.50', G, '今开', '41.42', G], ['涨跌', '-0.20', G, '最高', '41.86', R], ['涨幅', '-0.48%', G, '最低', '40.90', G],
  ['总量', '33094', 'text-[#505050]', '量比', '0.61', G], ['外盘', '16346', R, '内盘', '16748', G],
]
const BASICS = [['换手', '2.77%', '', '股本', '1.21亿', ''], ['净资', '8.25', '', '流通', '1.19亿', ''], ['收益㈢', '0.330', '', 'PE(动)', '95.0', '']]

function Facts({ rows }) {
  return rows.map(([a, va, ca, b, vb, cb]) => (
    <div key={a} className="flex h-[38px] items-center pr-1 pb-0.5 pl-[3px] text-[31px] whitespace-nowrap">
      <span className="w-[90px]">{a}</span>
      <span className={`w-[137px] text-right text-[28px] font-bold ${ca}`}>{va}</span>
      <span className="ml-2">{b.startsWith('PE') ? <><b className="text-[28px]">PE</b><span className="text-[28px]">(动)</span></> : b}</span>
      <span className={`ml-auto text-[28px] font-bold ${cb}`}>{vb.replace('亿', '')}{vb.endsWith('亿') && <span className="text-[31px] font-normal">亿</span>}</span>
    </div>
  ))
}

const LEVELS = ['42.50', '42.43', '42.35', '42.28', '42.21', '42.14', '42.06', '41.99', '41.92', '41.85', '41.77', '41.70', '41.63', '41.55', '41.48', '41.41', '41.34', '41.26', '41.19', '41.12', '41.05', '40.97']
const linePoints = (s) => parse(s).map(([x, y]) => `${2080 + Math.round(x / KX)},${y}`).join(' ')

function IntradayChart() {
  return (
    <svg className="block" width="466" height="1017" viewBox="2604 843 466 1017" shapeRendering="crispEdges" overflow="visible">
      {LEVELS.map((v, i) => {
        const y = Math.round(843 + 33.2 * i)
        return (
          <Fragment key={v}>
            {i !== 0 && i !== 11 && <path d={`M2608 ${y}H2966`} stroke="#c8c8c8" strokeWidth="2" strokeDasharray="2 4" />}
            <T x={2975} cy={y} fill={i < 11 ? '#f04040' : i > 11 ? DOWN : '#333'}>{v}</T>
          </Fragment>
        )
      })}
      {[1695, 1453, 1211, 969, 726, 484, 242].map((v, i) => (
        <Fragment key={v}>
          {i > 0 && <path d={`M2608 ${1573 + 38 * i}H2966`} stroke="#c8c8c8" strokeWidth="2" strokeDasharray="2 4" />}
          <T x={2973} cy={1573 + 38 * i} fill="#505050">{v}</T>
        </Fragment>
      ))}
      <path d="M2695 850V1840M2879 850V1840" stroke="#c8c8c8" strokeWidth="2" strokeDasharray="2 6" />
      <path d="M2604 844H2969V1841M2604 1208H2969M2604 1575H2969M2785 844V1841M2604 1841H3070" fill="none" stroke={LINE} strokeWidth="2" />
      {parse(INTRADAY_VOLUME).map(([x, v, c]) => (
        <rect key={x} x={2080 + Math.round(x / KX)} y={1840 - Math.round(v / KV)} width="2" height={Math.round(v / KV)} fill={COLORS[c]} />
      ))}
      <polyline points={linePoints(INTRADAY)} fill="none" stroke="#404040" strokeWidth="2" />
      <polyline points={linePoints(AVERAGE)} fill="none" stroke="#1478c8" strokeWidth="2" />
    </svg>
  )
}

const PANEL_TABS = ['笔', '价', '细', '势', '联', '值', '主', '逆', '筹']

function QuotePanel() {
  return (
    <div className="flex w-[470px] shrink-0 flex-col border-x-2 border-[#b0b0b0]">
      <div className="relative flex h-[53px] items-center border-b-2 border-[#c0c0c0] pb-1 pl-[67px] text-[31px]">
        <b className="mr-2 text-[28px]">300557</b>理工光科
        <svg className="absolute top-[4px] left-[362px] z-10" width="140" height="54">
          <text x="2" y="38" fontSize="33" fontWeight="700" fill="#fff" stroke="#777" strokeWidth="2.500" paintOrder="stroke">股海明灯</text>
        </svg>
      </div>
      <div className="h-[216px] border-b-2 border-[#c0c0c0] pt-[10px]"><Book rows={SELL} /></div>
      <div className="h-[212px] border-b-2 border-[#c0c0c0] pt-[5px]"><Book rows={BUY} /></div>
      <div className="h-[194px] border-b-2 border-[#c0c0c0]"><Facts rows={QUOTES} /></div>
      <div className="h-[122px] border-b-2 border-[#c0c0c0]"><Facts rows={BASICS} /></div>
      <div className="flex h-[41px] items-center gap-[18px] pb-1">理工光科<span className="text-[#606060]">电器仪表</span></div>
      <IntradayChart />
      <div className="flex h-[38px] border-y-2 border-[#c0c0c0]">
        {PANEL_TABS.map((t) => (
          <div key={t} className={`flex flex-1 items-center justify-center border-r-2 border-[#c0c0c0] pr-1 last:border-r-0 ${t === '势' ? 'text-[#e60000]' : ''}`}>{t}</div>
        ))}
      </div>
    </div>
  )
}

/* ---------- right tool strip ---------- */

const Frame = ({ stroke = '#4080e0', children }) => (
  <svg width="32" height="30" viewBox="0 0 32 30">
    <rect x="1.500" y="1.500" width="29" height="27" fill="#fff" stroke={stroke} strokeWidth="2" />
    {children}
  </svg>
)
const Arrow = ({ turn }) => (
  <svg width="32" height="32" viewBox="0 0 32 32"><path d="M16 2l11 12h-6v15h-10v-15h-6z" transform={turn} fill="#fafcff" stroke="#4080e0" strokeWidth="2" /></svg>
)
const Label = ({ t, small, stroke }) => (
  <Frame stroke={stroke}>
    <text x="16" y="23" fontSize="20" fill="#2040c0" textAnchor="middle" fontFamily="Liberation Sans">{t}<tspan fontSize="17">{small}</tspan></text>
  </Frame>
)

const TOOLS_TOP = [
  <Arrow turn="rotate(-90 16 16)" />,
  <Arrow />,
  <Arrow turn="rotate(180 16 16)" />,
  <Frame>
    <path d="M5 5h8M5 9h8M5 13h8M5 17h8" stroke="#208020" strokeWidth="2" />
    <path d="M16 5h11M16 9h11M16 13h11" stroke="#e02020" strokeWidth="2" />
    <path d="M26 14l-8 4l-5 6l6 3l7-4l2-8z" fill="#eee" stroke="#808080" strokeWidth="2" /><path d="M18 21l3 2l4-5" stroke="#808080" fill="none" strokeWidth="1.500" />
  </Frame>,
  <Frame>
    <path d="M8 6v20" stroke="#e02020" strokeWidth="6" strokeDasharray="2 2" />
    <path d="M16 6v20" stroke="#208020" strokeWidth="5" strokeDasharray="2 2" />
    <path d="M24 6v20" stroke="#2020e0" strokeWidth="6" strokeDasharray="2 2" />
  </Frame>,
  <Frame><path d="M3 21l7-6l5 4l8-8l6-3" fill="none" stroke="#e02020" strokeWidth="2" /></Frame>,
  <Frame>
    <path d="M8 8v14M24 3v14" stroke="#e00000" strokeWidth="2" /><path d="M16 6v20" stroke="#008000" strokeWidth="2" />
    <path d="M5 11h6v8H5zM21 6h6v8h-6z" fill="#e00000" /><path d="M13 9h6v12h-6z" fill="#008000" />
  </Frame>,
  <svg width="32" height="30" viewBox="0 0 32 30">
    <path d="M7 8V2h23v19h-4" fill="#e4f0ff" stroke="#4080e0" strokeWidth="2" /><rect x="2" y="8" width="24" height="20" fill="#fff" stroke="#4080e0" strokeWidth="2" />
    <path d="M5 14h18M5 18h18M5 22h18" stroke="#555" strokeWidth="2" strokeDasharray="8 2" />
  </svg>,
  <Label t="F" small="10" />,
  <Frame>
    <path d="M10 10v13h8M10 14h8" fill="none" stroke="#4080e0" strokeWidth="2" />
    <path d="M7 5h9v5H7zM18 12h8v5h-8zM18 20h8v5h-8z" fill="#ffe040" stroke="#e0a000" strokeWidth="1.500" />
  </Frame>,
  <Frame stroke="#2080e0">
    <path d="M14 5h4v3h-4zM8 8h16v15H8z" fill="#ff8040" /><path d="M11 12h10M11 16h10M11 20h10" stroke="#fff" strokeWidth="2" />
  </Frame>,
  <Label t="F" small="12" />,
  <svg width="32" height="32" viewBox="0 0 32 32"><rect x="1.500" y="1.500" width="29" height="29" rx="6" fill="#e8f8ff" stroke="#208080" strokeWidth="2" /><text x="16" y="22" fontSize="18" fontStyle="italic" fill="#2040c0" textAnchor="middle" fontFamily="Liberation Serif">f(x)</text></svg>,
  <Frame><ellipse cx="16" cy="15" rx="7.500" ry="7" fill="none" stroke="#2060c0" strokeWidth="2" /></Frame>,
]

const TOOLS_MID = [
  <Frame>
    <path d="M4 12l3 2l4-5l3 5M4 22l3 2l4-5l3 5" fill="none" stroke="#e03030" strokeWidth="2" />
    <path d="M14 14l4-5l3 5M14 24l4-5l3 5" fill="none" stroke="#3050e0" strokeWidth="2" />
    <path d="M21 14l4-5l3 3M21 24l4-5l3 3" fill="none" stroke="#e03030" strokeWidth="2" />
  </Frame>,
  <span className="font-['Liberation_Sans'] text-[19px] font-bold text-[#3040d0]">RSI</span>,
  <svg width="30" height="34" viewBox="0 0 30 34">
    <text x="16" y="29" fontSize="27" fontWeight="700" fill="#909090" textAnchor="middle" fontFamily="Liberation Sans">S</text>
    <text x="14" y="28" fontSize="27" fontWeight="700" fill="#d03038" textAnchor="middle" fontFamily="Liberation Sans">S</text>
    <path d="M14 1l6 6H8z" fill="#d03038" />
  </svg>,
  <svg width="32" height="32" viewBox="0 0 32 32">
    <path d="M16 1l6 7h-12zM16 31l6-7h-12zM1 16l7-6v12zM31 16l-7-6v12z" fill="#1060c0" /><path d="M16 8v16M8 16h16" stroke="#1060c0" strokeWidth="4" strokeDasharray="7 2" />
  </svg>,
  <svg width="32" height="32" viewBox="0 0 32 32"><path d="M3 29l3-9L22 3l6 5L12 26z" fill="#f0a828" stroke="#806020" /><path d="M20 5l2-3l7 5l-3 4z" fill="#e08080" /><path d="M3 29l1-4l3 2z" fill="#333" /></svg>,
]

const TOOLS_LOW = [
  <Label t="F" small="5" stroke="#2080e0" />,
  <Frame>
    <path d="M9 13a7 6 0 0 1 12-3M23 17a7 6 0 0 1-12 4" fill="none" stroke="#60c850" strokeWidth="5" />
    <path d="M6 7v9h9zM26 23v-9h-9z" fill="#60c850" />
  </Frame>,
]

const PERIOD_KEYS = ['1', '5', '15', '30', '60', '日', '周', '月', 'N', '多', '季', '年']

function ToolStrip() {
  return (
    <div className="flex w-[48px] shrink-0 flex-col items-center bg-[#f0f0f0] pr-0.5 text-[#103080]">
      {TOOLS_TOP.map((icon, i) => <div key={i} className="flex h-[46px] items-center first:h-[42px]">{icon}</div>)}
      <div className="flex h-4 w-[38px] items-center"><hr className="w-full border-t-2 border-[#a0a0a0]" /></div>
      {TOOLS_MID.map((icon, i) => <div key={i} className="flex h-[46px] items-center">{icon}</div>)}
      <div className="flex h-4 w-[38px] items-center"><hr className="w-full border-t-2 border-[#a0a0a0]" /></div>
      {TOOLS_LOW.map((icon, i) => <div key={i} className="flex h-[46px] items-center">{icon}</div>)}
      {PERIOD_KEYS.map((t) => (
        <div key={t} className={`flex h-[46px] w-[44px] items-center justify-center text-[23px] ${t === '日' ? 'border-2 border-[#a0a0a0] border-r-white border-b-white bg-[#f8f8f8]' : ''}`}>{t}</div>
      ))}
    </div>
  )
}

/* ---------- status bar ---------- */

const MARKETS = [
  ['上证', 'w-[50px]', '4118.68', 'w-[129px]', '10.11', 'w-[80px]', '0.25%', 'w-[96px]', '6099亿', 'w-[103px]'],
  ['深证', 'w-[52px]', '14201.73', 'w-[121px]', '112.89', 'w-[89px]', '0.80%', 'w-[94px]', '7754亿', 'w-[103px]'],
  ['北证', 'w-[55px]', '1432.94', 'w-[135px]', '5.71', 'w-[72px]', '0.40%', 'w-[96px]', '121.6亿', 'w-[104px]'],
  ['创业', 'w-[52px]', '3244.32', 'w-[128px]', '27.38', 'w-[81px]', '0.85%', 'w-[94px]', '3432亿', 'w-[104px]'],
]

function Meter() {
  return (
    <svg width="97" height="28" viewBox="0 0 96 28">
      <path d="M1 1h93v12H1z" fill="#f0f0f0" stroke="#fff" strokeWidth="2" />
      <path d="M17 1h28v12H17z" fill="#ff0000" /><path d="M17 1v12" stroke="#800000" strokeWidth="2" /><path d="M47 1h18v12H47z" fill="#008000" />
      <path d="M2 18H95M2 25H95" stroke="#ff0000" strokeWidth="4" strokeDasharray="12 4.200" />
    </svg>
  )
}

function StatusBar() {
  return (
    <div className="flex h-[42px] items-center border-b-2 border-[#a8b0b4] bg-[#f0f0f0] text-[25px] whitespace-nowrap text-black">
      {MARKETS.map(([name, a, last, b, diff, c, pct, d, amount, e]) => (
        <Fragment key={name}>
          <span className={`shrink-0 pt-1.5 text-[24px] ${a}`}>{name}</span>
          <span className={`shrink-0 pt-1.5 text-[#e01010] ${b}`}>{last}</span>
          <span className={`shrink-0 pt-1.5 text-[#e01010] ${c}`}>{diff}</span>
          <span className={`shrink-0 pt-1.5 text-[#e01010] ${d}`}>{pct}</span>
          <span className={`shrink-0 pt-1.5 ${e}`}>{amount}</span>
        </Fragment>
      ))}
      <div className="flex h-full items-center gap-1 border-x-2 border-[#a0a0a0] pt-1 pr-1 pl-1.5"><Meter /><Meter /></div>
      <span className="ml-2 pt-1.5 text-[24px]">北京双线主站8</span>
      <div className="mt-1 mr-4 ml-auto flex h-[29px] w-[200px] items-center rounded-full bg-[#a8a8a8] pl-2.5">
        <svg width="20" height="20" viewBox="0 0 20 20"><circle cx="8" cy="8" r="6.500" fill="none" stroke="#d8d8d8" strokeWidth="2" /><path d="M13 13l6 6" stroke="#d8d8d8" strokeWidth="2" /></svg>
      </div>
      <svg className="mt-1 mr-[64px]" width="114" height="26" viewBox="0 0 114 26">
        <rect x="1" y="1" width="22" height="24" rx="5" fill="#e8e020" stroke="#808000" strokeWidth="2" />
        <path d="M12 5l6 6h-4v9h-4v-9H6z" fill="#a0a000" />
        <path d="M42 2h16v14l-6 2l-10-8z" fill="#808080" /><path d="M39 24l6-9l5 9z" fill="#909090" />
        <path d="M83 1l7 7H76z" fill="#ff0000" /><path d="M83 9l7 7H76z" fill="#f8f000" /><path d="M83 17l7 7H76z" fill="#008000" />
        <path d="M110 3v12M110 19v4" stroke="#808080" strokeWidth="4" />
      </svg>
    </div>
  )
}

export default function App() {
  return (
    <div className="relative flex h-[1945px] w-[3120px] flex-col overflow-hidden bg-[#fcfcfc] font-['Noto_Sans_CJK_SC','Liberation_Sans',sans-serif] text-[24px] leading-none text-[#333]">
      <div className="h-[5px] shrink-0 border-t-2 border-b-[3px] border-t-[#f4f4f4] border-b-[#687068]" />
      <div className="flex h-[1893px] shrink-0">
        <div className="flex w-[2602px] shrink-0 flex-col">
          <div className="flex h-[1857px] shrink-0">
            <SideTabs />
            <Charts />
          </div>
          <ExtraBar />
        </div>
        <QuotePanel />
        <ToolStrip />
      </div>
      <StatusBar />
      <div className="flex-1 bg-[#d4e8f0]" />
      <svg className="absolute top-[19px] left-[1506px]" width="26" height="40" viewBox="0 0 26 40">
        <path d="M1 1v32l7-7l6 12l5-2l-6-12h11z" fill="#fff" stroke="#333" strokeWidth="1.500" />
      </svg>
    </div>
  )
}
